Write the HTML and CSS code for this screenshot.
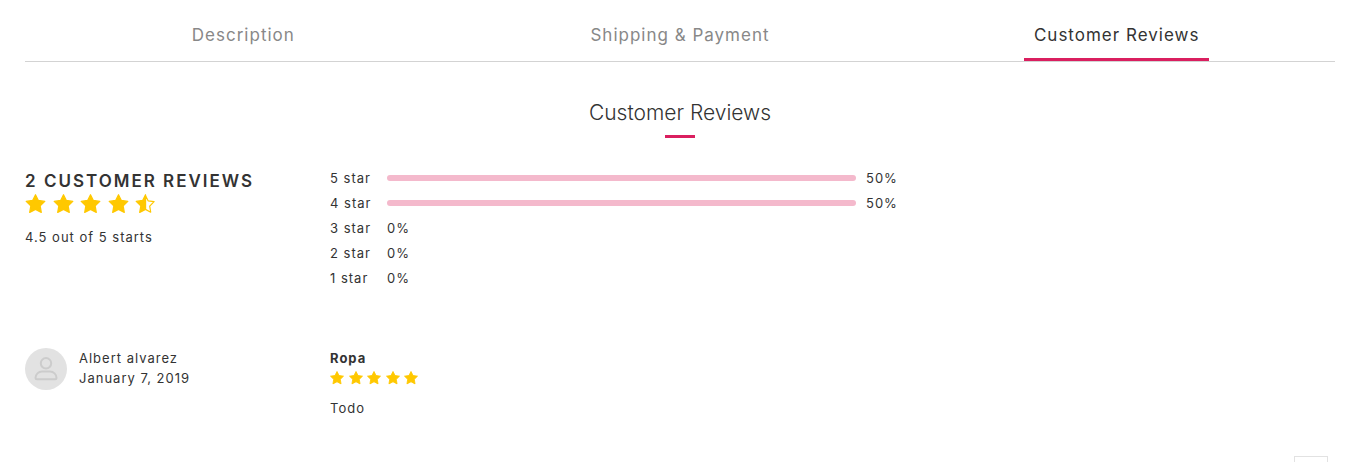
FILE: index.html
```html
<!DOCTYPE html>
<html lang="en">

<head>
    <meta charset="UTF-8">
    <meta name="viewport" content="width=device-width, initial-scale=1.0">
    <title>Customer Reviews</title>
    <link rel="stylesheet" href="styles.css">
</head>

<body>
    <svg class="sprite" aria-hidden="true">
        <symbol id="star" viewBox="0 0 20 20">
            <path d="M10 .7l2.9 5.7 6.4 1-4.6 4.5 1.1 6.5-5.8-3-5.8 3 1.1-6.5L.7 7.4l6.4-1z" />
        </symbol>
        <symbol id="star-half" viewBox="0 0 20 20">
            <path d="M10 .7v14.7l-5.8 3 1.1-6.5L.7 7.4l6.4-1z" />
            <path fill="none" d="M10 1.4l2.6 5.4 6 .9-4.4 4.4 1 6.1-5.2-2.8z" />
        </symbol>
    </svg>

    <nav class="tabs">
        <div class="tab"><a href="#description">Description</a></div>
        <div class="tab"><a href="#shipping">Shipping &amp; Payment</a></div>
        <div class="tab"><a class="active" href="#reviews">Customer Reviews</a></div>
    </nav>

    <main id="reviews">
        <h2>Customer Reviews</h2>

        <section class="row summary">
            <div>
                <h3>2 Customer Reviews</h3>
                <div class="stars" role="img" aria-label="4.5 stars">
                    <svg><use href="#star" /></svg>
                    <svg><use href="#star" /></svg>
                    <svg><use href="#star" /></svg>
                    <svg><use href="#star" /></svg>
                    <svg><use href="#star-half" /></svg>
                </div>
                <p>4.5 out of 5 starts</p>
            </div>
            <ul class="ratings">
                <li><span class="label">5 star</span><span class="track"><span class="bar" style="width: 50%"></span><span>50%</span></span></li>
                <li><span class="label">4 star</span><span class="track"><span class="bar" style="width: 50%"></span><span>50%</span></span></li>
                <li><span class="label">3 star</span><span class="track"><span>0%</span></span></li>
                <li><span class="label">2 star</span><span class="track"><span>0%</span></span></li>
                <li><span class="label">1 star</span><span class="track"><span>0%</span></span></li>
            </ul>
        </section>

        <article class="row review">
            <div class="author">
                <span class="avatar">
                    <svg viewBox="0 0 24 24" aria-hidden="true">
                        <circle cx="12" cy="6.3" r="5.2" />
                        <path d="M2.8 22.2c-.9 0-1.3-.4-1.3-1.2 0-3.8 3-6.4 6.5-6.4h8c3.5 0 6.5 2.6 6.5 6.4 0 .8-.4 1.2-1.3 1.2z" />
                    </svg>
                </span>
                <div>
                    <div>Albert alvarez</div>
                    <time datetime="2019-01-07">January 7, 2019</time>
                </div>
            </div>
            <div>
                <h4>Ropa</h4>
                <div class="stars small" role="img" aria-label="5 stars">
                    <svg><use href="#star" /></svg>
                    <svg><use href="#star" /></svg>
                    <svg><use href="#star" /></svg>
                    <svg><use href="#star" /></svg>
                    <svg><use href="#star" /></svg>
                </div>
                <p>Todo</p>
            </div>
        </article>
    </main>

    <button class="to-top" type="button" aria-label="Back to top"></button>
</body>

</html>
```
FILE: styles.css
```css
* {
    box-sizing: border-box;
}

body {
    margin: 0;
    padding: 8px 32px 0 25px;
    background-color: #ffffff;
    color: #333333;
    font-family: Inter, "Liberation Sans", sans-serif;
    font-size: 13px;
    line-height: 20px;
    letter-spacing: 1px;
}

h2,
h3,
h4,
p,
ul {
    margin: 0;
    padding: 0;
}

.sprite {
    display: none;
}

/* tabs */
.tabs {
    display: grid;
    grid-template-columns: repeat(3, 1fr);
    border-bottom: 1px solid #d3d3d3;
}

.tab {
    display: flex;
    justify-content: center;
}

.tab a {
    padding: 14px 10px 9px;
    border-bottom: 3px solid transparent;
    color: #888888;
    font-size: 17px;
    line-height: 27px;
    text-decoration: none;
}

.tab a.active {
    border-color: #da1f5f;
    color: #333333;
}

/* headings */
h2 {
    padding-top: 36px;
    font-size: 21px;
    font-weight: 300;
    line-height: 30px;
    letter-spacing: 0;
    text-align: center;
}

h2::after {
    content: "";
    display: block;
    width: 30px;
    height: 3px;
    margin: 7px auto 0;
    background-color: #da1f5f;
}

h3 {
    font-size: 17px;
    font-weight: 600;
    line-height: 26px;
    letter-spacing: 2px;
    text-transform: uppercase;
}

h4 {
    font-size: 13px;
    font-weight: 700;
}

.row {
    display: grid;
    grid-template-columns: 305px 1fr;
}

.summary {
    padding-top: 30px;
}

/* stars */
.stars {
    display: flex;
    justify-content: space-between;
    width: 131px;
    margin-bottom: 13px;
}

.stars svg {
    width: 21px;
    height: 20px;
    fill: #ffc800;
    stroke: #ffc800;
    stroke-width: 1.2;
    stroke-linejoin: round;
}

.stars.small {
    width: 88px;
    margin: 3px 0 13px;
}

.stars.small svg {
    width: 14px;
    height: 14px;
}

/* rating bars */
.ratings {
    list-style: none;
}

.ratings li {
    display: flex;
    margin-bottom: 5px;
}

.label {
    width: 57px;
}

.track {
    display: flex;
    flex: 1;
    align-items: center;
    padding-right: 10px;
}

.bar {
    height: 6px;
    margin-right: 10px;
    border-radius: 3px;
    background-color: #f4b9cc;
}

/* single review */
.review {
    padding-top: 55px;
}

.author {
    display: flex;
    gap: 12px;
}

.avatar {
    display: flex;
    align-items: center;
    justify-content: center;
    width: 42px;
    height: 42px;
    border-radius: 50%;
    background-color: #e2e2e2;
}

.avatar svg {
    width: 24px;
    height: 24px;
    fill: none;
    stroke: #cccccc;
    stroke-width: 2;
}

.to-top {
    position: fixed;
    right: 39px;
    bottom: -28px;
    width: 34px;
    height: 34px;
    border: 1px solid #e2e2e2;
    background-color: #ffffff;
}
```
